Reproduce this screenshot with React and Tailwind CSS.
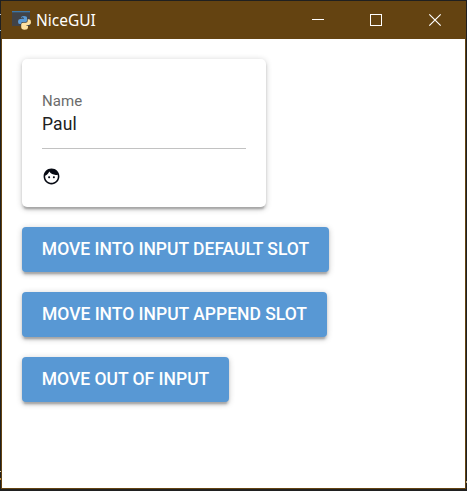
const buttons = [
  { label: 'MOVE INTO INPUT DEFAULT SLOT', width: 'w-[307px]' },
  { label: 'MOVE INTO INPUT APPEND SLOT', width: 'w-[305px]' },
  { label: 'MOVE OUT OF INPUT', width: 'w-[207px]' },
];

function FaceIcon() {
  return (
    <svg viewBox="0 0 24 24" fill="currentColor" className="ml-[-0.5px] mt-[18px] size-[19px] text-[#080b14]">
      <path d="M9 11.75c-.69 0-1.25.56-1.25 1.25s.56 1.25 1.25 1.25 1.25-.56 1.25-1.25-.56-1.25-1.25-1.25zm6 0c-.69 0-1.25.56-1.25 1.25s.56 1.25 1.25 1.25 1.25-.56 1.25-1.25-.56-1.25-1.25-1.25zM12 2C6.48 2 2 6.48 2 12s4.48 10 10 10 10-4.48 10-10S17.52 2 12 2zm0 18c-4.41 0-8-3.59-8-8 0-.29.02-.58.05-.86 2.36-1.05 4.23-2.98 5.21-5.37C11.07 8.33 14.05 10 17.42 10c.78 0 1.53-.09 2.25-.26.21.71.33 1.47.33 2.26 0 4.41-3.59 8-8 8z" />
    </svg>
  );
}

function AppIcon() {
  return (
    <svg width="20" height="20" viewBox="0 0 20 20" className="shrink-0">
      <rect x="0" y="1" width="18" height="15" fill="#414347" />
      <rect x="0" y="1" width="18" height="1.3" fill="#3c77a8" />
      <path d="M9.3 7.2Q9.3 6 12 6Q15 6 15 7.7V10.5Q15 12 13.3 12H10.5Q9 12 9 14H7.5Q6 14 6 11.5Q6 9 8 9H12V8.3H9.3Z" fill="#5b9bd5" />
      <path d="M15.7 9.3H17Q19 9.5 19 12.2Q19 15 17 15.1H14.5V15.8H16V17.2Q16 19.7 12.5 19.7Q9.2 19.7 9.2 17V14.5Q9.2 12.8 11 12.7H13.7Q15.7 12.7 15.7 11Z" fill="#ffe1a0" />
      <circle cx="10.8" cy="7.3" r=".6" fill="#263b50" />
    </svg>
  );
}

function TitleBar() {
  return (
    <header className="flex h-[38px] shrink-0 items-center bg-[#644311] pl-[11px] text-white">
      <AppIcon />
      <span className="ml-[4px] font-['Noto_Sans',sans-serif] text-[15.5px] leading-5">NiceGUI</span>
      <div className="ml-auto mr-px flex">
        <svg width="58" height="38" viewBox="0 0 58 38" fill="none" stroke="white">
          <path d="M22 18.5H34" />
        </svg>
        <svg width="58" height="38" viewBox="0 0 58 38" fill="none" stroke="white">
          <rect x="22.5" y="13.5" width="11" height="11" />
        </svg>
        <svg width="59" height="38" viewBox="0 0 59 38" fill="none" stroke="white" strokeWidth="1.2">
          <path d="M23.3 13.3L34.7 24.7M34.7 13.3L23.3 24.7" />
        </svg>
      </div>
    </header>
  );
}

export default function App() {
  return (
    <div className="relative h-[491px] w-[467px] overflow-hidden bg-[#202020] pl-px pt-px font-[Roboto,sans-serif]">
      <i className="absolute left-0 top-[14px] h-px w-px bg-[#c8c8c8]" />
      <i className="absolute left-0 top-[30px] h-px w-px bg-[#9fc5df]" />
      <i className="absolute left-0 top-[471px] h-px w-px bg-[#e6d7ae]" />
      <i className="absolute left-0 top-[478px] h-[2px] w-px bg-[#b68b49]" />
      <i className="absolute right-0 top-[481px] h-[2px] w-px bg-[#b9a583]" />
      <div className="flex h-[488px] w-[465px] flex-col border-b border-[#644311] bg-[#644311]">
        <TitleBar />
        <main className="ml-px mr-px flex grow flex-col items-start gap-5 bg-white px-5 pt-5">
          <section className="h-[148px] w-[244px] rounded-[5px] bg-white px-5 pt-[33px] shadow-[0_1.25px_6.25px_rgba(0,0,0,0.2),0_2.5px_2.5px_rgba(0,0,0,0.14),0_3.75px_1.25px_-2.5px_rgba(0,0,0,0.12)]">
            <div className="h-[57px] border-b border-[#c2c2c2]">
              <div className="text-[15px] leading-[18px] tracking-[0.1px] text-[#6b6b6b]">Name</div>
              <div className="mt-[3px] text-[17.5px] leading-[22px] tracking-[0.1px] text-[#212121]">Paul</div>
            </div>
            <FaceIcon />
          </section>
          {buttons.map(({ label, width }) => (
            <button
              key={label}
              className={`${width} h-[45px] whitespace-nowrap rounded-[4px] bg-[#5898d4] pb-[2px] text-[17.5px] font-medium leading-[30px] text-white shadow-[0_1.25px_6.25px_rgba(0,0,0,0.2),0_2.5px_2.5px_rgba(0,0,0,0.14),0_3.75px_1.25px_-2.5px_rgba(0,0,0,0.12)]`}
            >
              {label}
            </button>
          ))}
        </main>
      </div>
    </div>
  );
}
